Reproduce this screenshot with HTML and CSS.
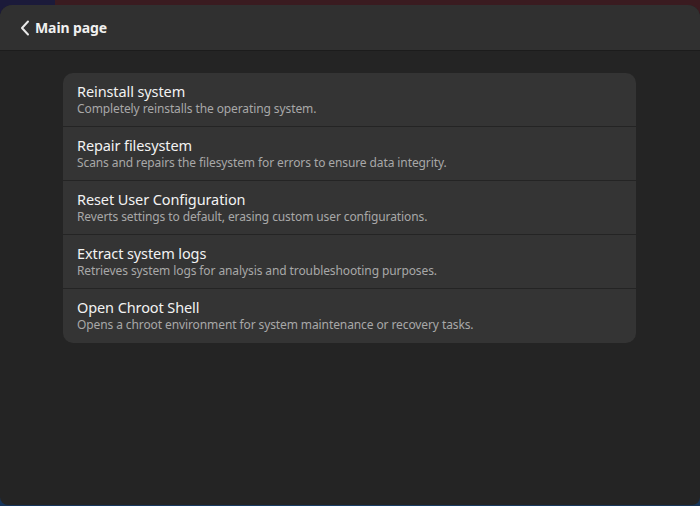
FILE: index.html
```html
<!DOCTYPE html>
<html>
<head>
<meta charset="utf-8">
<link rel="stylesheet" href="styles.css">
</head>
<body>
<div class="desktop">
  <div class="strip"><div class="strip-left"></div><div class="strip-right"></div></div>
  <div class="window">
    <header class="header">
      <svg class="back" width="10" height="16" viewBox="0 0 10 16"><path d="M8 1.5 L2 8 L8 14.5" fill="none" stroke="#e8e8e8" stroke-width="2" stroke-linecap="round" stroke-linejoin="round"/></svg>
      <span class="header-title">Main page</span>
    </header>
    <main class="content">
      <div class="list">
        <div class="row"><div class="row-title">Reinstall system</div><div class="row-sub">Completely reinstalls the operating system.</div></div>
        <div class="row"><div class="row-title">Repair filesystem</div><div class="row-sub">Scans and repairs the filesystem for errors to ensure data integrity.</div></div>
        <div class="row"><div class="row-title">Reset User Configuration</div><div class="row-sub">Reverts settings to default, erasing custom user configurations.</div></div>
        <div class="row"><div class="row-title">Extract system logs</div><div class="row-sub">Retrieves system logs for analysis and troubleshooting purposes.</div></div>
        <div class="row"><div class="row-title">Open Chroot Shell</div><div class="row-sub">Opens a chroot environment for system maintenance or recovery tasks.</div></div>
      </div>
    </main>
  </div>
</div>
</body>
</html>
```
FILE: styles.css
```css
html, body { margin: 0; padding: 0; }
body {
  width: 700px; height: 506px; overflow: hidden;
  font-family: "Noto Sans", "Open Sans", sans-serif;
  background: linear-gradient(90deg, #16345a 0%, #1a3e66 50%, #173558 100%);
}
.desktop { position: relative; width: 700px; height: 506px; }
.strip { position: absolute; top: 0; left: 0; right: 0; height: 14px; display: flex; }
.strip-left { width: 55px; background: #1b1a3a; }
.strip-right { flex: 1; background: #3a1b20; }
.window {
  position: absolute; top: 5px; left: 0; right: 0; bottom: 1px;
  background: #242424;
  border-radius: 12px 12px 8px 8px;
  overflow: hidden;
  display: flex; flex-direction: column;
}
.header {
  height: 45px; flex: none;
  background: #303030;
  border-bottom: 1px solid #1c1c1c;
  display: flex; align-items: center;
  padding-left: 20px;
}
.back { margin-right: 5px; margin-top: 1px; }
.header-title { color: #f0f0f0; font-weight: 700; font-size: 14px; letter-spacing: -0.1px; }
.content { padding: 22px 64px 0 63px; }
.list {
  background: #343434;
  border-radius: 10px;
  overflow: hidden;
}
.row {
  border-bottom: 1px solid #242424;
  padding: 9px 14px 0 14px;
  box-sizing: border-box;
  height: 54px;
}
.row:last-child { border-bottom: none; }
.row-title { color: #f2f2f2; font-size: 14.5px; line-height: 18px; letter-spacing: -0.1px; }
.row-sub { color: #a8a8a8; font-size: 12px; line-height: 14px; letter-spacing: -0.1px; margin-top: 2px; }
```
